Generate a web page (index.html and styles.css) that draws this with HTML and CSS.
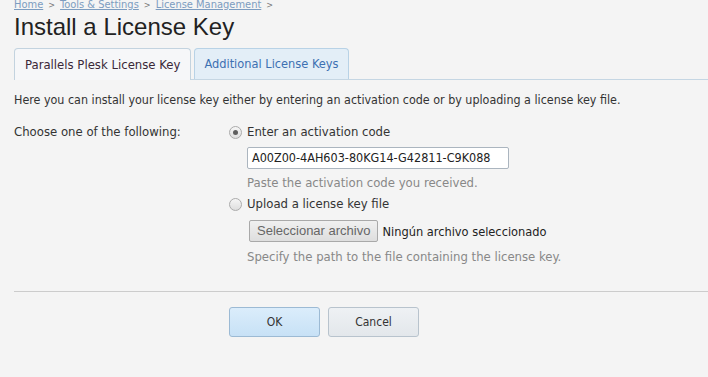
FILE: index.html
```html
<!DOCTYPE html>
<html>
<head>
<meta charset="utf-8">
<link rel="stylesheet" href="styles.css">
</head>
<body>
<div class="page">
  <div class="crumbs">
    <a href="#">Home</a><span class="sep">&gt;</span><a href="#">Tools &amp; Settings</a><span class="sep">&gt;</span><a href="#">License Management</a><span class="sep">&gt;</span>
  </div>
  <h1 class="title">Install a License Key</h1>
  <div class="tabs">
    <div class="tab active">Parallels Plesk License Key</div>
    <div class="tab">Additional License Keys</div>
  </div>
  <p class="intro">Here you can install your license key either by entering an activation code or by uploading a license key file.</p>
  <div class="form">
    <div class="label">Choose one of the following:</div>
    <div class="field">
      <label class="opt"><span class="radio checked"></span>Enter an activation code</label>
      <div class="input">A00Z00-4AH603-80KG14-G42811-C9K088</div>
      <div class="hint">Paste the activation code you received.</div>
      <label class="opt opt2"><span class="radio"></span>Upload a license key file</label>
      <div class="file"><span class="filebtn">Seleccionar archivo</span><span class="filename">Ningún archivo seleccionado</span></div>
      <div class="hint hint2">Specify the path to the file containing the license key.</div>
    </div>
  </div>
  <div class="rule"></div>
  <div class="actions">
    <button class="btn ok">OK</button>
    <button class="btn cancel">Cancel</button>
  </div>
</div>
</body>
</html>
```

FILE: styles.css
```css
html, body {
  margin: 0;
  padding: 0;
  background: #f4f4f4;
}
body {
  font-family: "DejaVu Sans Condensed", "DejaVu Sans", sans-serif;
  font-size: 13px;
  color: #333;
}
.page {
  padding-left: 14px;
}
.crumbs {
  font-size: 11px;
  line-height: 12px;
  height: 14px;
  margin-top: -1px;
  color: #777;
}
.crumbs a {
  color: #7c9cc0;
  text-decoration: underline;
}
.crumbs .sep {
  margin: 0 5px;
  font-size: 9px;
}
.title {
  margin: 0;
  font-family: "Liberation Sans", Arial, sans-serif;
  font-weight: normal;
  font-size: 24px;
  line-height: 28px;
  color: #222;
}
.tabs {
  margin-top: 7px;
  display: flex;
  align-items: flex-end;
  gap: 3px;
  border-bottom: 1px solid #c5d6e3;
}
.tab {
  height: 30px;
  line-height: 30px;
  padding: 0 9px;
  border: 1px solid #b8d2e6;
  border-bottom: none;
  border-radius: 4px 4px 0 0;
  background: #e3eef7;
  color: #3d70b2;
  font-size: 12.7px;
}
.tab.active {
  height: 31px;
  line-height: 31px;
  padding: 0 10px;
  margin-bottom: -1px;
  background: #f6f7f9;
  border-color: #c3d3df;
  color: #3a2838;
  font-size: 13px;
}
.intro {
  margin: 12px 0 0;
  font-size: 12.4px;
  line-height: 16px;
}
.form {
  margin-top: 16px;
  display: grid;
  grid-template-columns: 215px 1fr;
}
.label {
  line-height: 16px;
}
.field {
  display: flex;
  flex-direction: column;
  align-items: flex-start;
}
.opt {
  display: flex;
  align-items: center;
  line-height: 16px;
  gap: 5px;
}
.radio {
  width: 11px;
  height: 11px;
  border-radius: 50%;
  border: 1px solid #ababab;
  background: linear-gradient(#f6f6f6, #dedede);
  box-sizing: content-box;
  position: relative;
  display: inline-block;
}
.radio.checked::after {
  content: "";
  position: absolute;
  left: 3px;
  top: 3px;
  width: 5px;
  height: 5px;
  border-radius: 50%;
  background: #5e5e5e;
}
.input {
  margin: 7px 0 0 18px;
  width: 252px;
  height: 20px;
  line-height: 20px;
  padding: 0 4px;
  background: #fff;
  border: 1px solid #abb5bf;
  border-radius: 2px;
  color: #222;
  font-size: 12.5px;
}
.hint {
  margin: 6px 0 0 18px;
  line-height: 16px;
  color: #888;
}
.opt2 {
  margin-top: 5px;
}
.file {
  margin: 8px 0 0 20px;
  display: flex;
  align-items: center;
}
.filebtn {
  height: 20px;
  line-height: 20px;
  padding: 0 7px;
  border: 1px solid #a9a9a9;
  border-radius: 2px;
  background: linear-gradient(#f0f0f0, #dedede);
  font-family: "Liberation Sans", Arial, sans-serif;
  font-size: 13px;
  color: #666;
}
.filename {
  margin-left: 4px;
  color: #222;
  font-size: 12.7px;
}
.hint2 {
  margin-top: 7px;
}
.rule {
  margin-top: 26px;
  height: 1px;
  background: #cccccc;
}
.actions {
  margin: 15px 0 0 215px;
  display: flex;
  gap: 8px;
}
.btn {
  width: 91px;
  height: 30px;
  border-radius: 3px;
  font-family: "DejaVu Sans Condensed", "DejaVu Sans", sans-serif;
  font-size: 12px;
  color: #333;
  padding: 0;
}
.ok {
  border: 1px solid #9cbad4;
  background: linear-gradient(#dbedfb, #c7e1f6);
}
.cancel {
  border: 1px solid #b8c3cd;
  background: linear-gradient(#eef1f4, #e3e7eb);
}
```
